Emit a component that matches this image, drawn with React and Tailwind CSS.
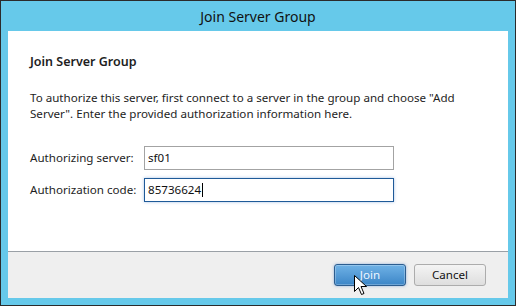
export default function App() {
  return (
    <div className="w-[516px] h-[306px] bg-[#2b2b2b] p-px">
      <div className="w-full h-full bg-[#66c9ea] flex flex-col px-[7px] pb-[7px] font-['Segoe_UI','Noto_Sans',sans-serif]">
        <div className="h-[30px] flex items-center justify-center text-[14px] text-[#111] pt-[1px]">
          Join Server Group
        </div>
        <div className="flex-1 flex flex-col bg-white">
          <div className="flex-1 flex flex-col pl-[22px] pt-[22px]">
            <div className="text-[12.5px] font-semibold text-[#1e1e1e] leading-[18px]">Join Server Group</div>
            <div className="mt-[19px] text-[11.6px] leading-[16px] text-[#1e1e1e]">
              To authorize this server, first connect to a server in the group and choose "Add
              <br />
              Server". Enter the provided authorization information here.
            </div>
            <div className="mt-[24px] flex flex-col gap-[8px]">
              <div className="flex items-center">
                <div className="w-[114px] text-[11.6px] text-[#1e1e1e]">Authorizing server:</div>
                <div className="w-[250px] h-[24px] border border-[#a3a3a3] flex items-center pl-[3px] text-[11.6px] text-[#111]">sf01</div>
              </div>
              <div className="flex items-center">
                <div className="w-[114px] text-[11.6px] text-[#1e1e1e]">Authorization code:</div>
                <div className="w-[250px] h-[24px] border border-[#1f5a98] shadow-[0_0_3px_rgba(60,120,200,0.45)] flex items-center pl-[3px] text-[11.6px] text-[#111]">
                  85736624<span className="inline-block w-px h-[14px] bg-black ml-px" />
                </div>
              </div>
            </div>
          </div>
          <div className="h-[47px] bg-[#efefef] border-t border-[#9aa0a6] flex items-start justify-end gap-[8px] pt-[12px] pr-[22px]">
            <div className="relative w-[72px] h-[22px] rounded-[3px] border border-[#2c5d8f] bg-gradient-to-b from-[#6fb2e6] to-[#3c86c7] shadow-[inset_0_0_0_1px_rgba(255,255,255,0.25),0_0_3px_rgba(60,120,200,0.5)] flex items-center justify-center text-[11.6px] text-[#eef6ff]">
              Join
              <svg className="absolute left-[19px] top-[10px]" width="14" height="21" viewBox="0 0 14 21">
                <path d="M0.5 0.5 L0.5 16.5 L4.5 12.5 L7.5 19.5 L10 18.5 L7 11.5 L12.5 11.5 Z" fill="white" stroke="black" strokeWidth="1" strokeLinejoin="miter" />
              </svg>
            </div>
            <div className="w-[72px] h-[22px] rounded-[3px] border border-[#acacac] bg-gradient-to-b from-[#f4f4f4] to-[#dedede] flex items-center justify-center text-[11.6px] text-[#111]">
              Cancel
            </div>
          </div>
        </div>
      </div>
    </div>
  );
}
